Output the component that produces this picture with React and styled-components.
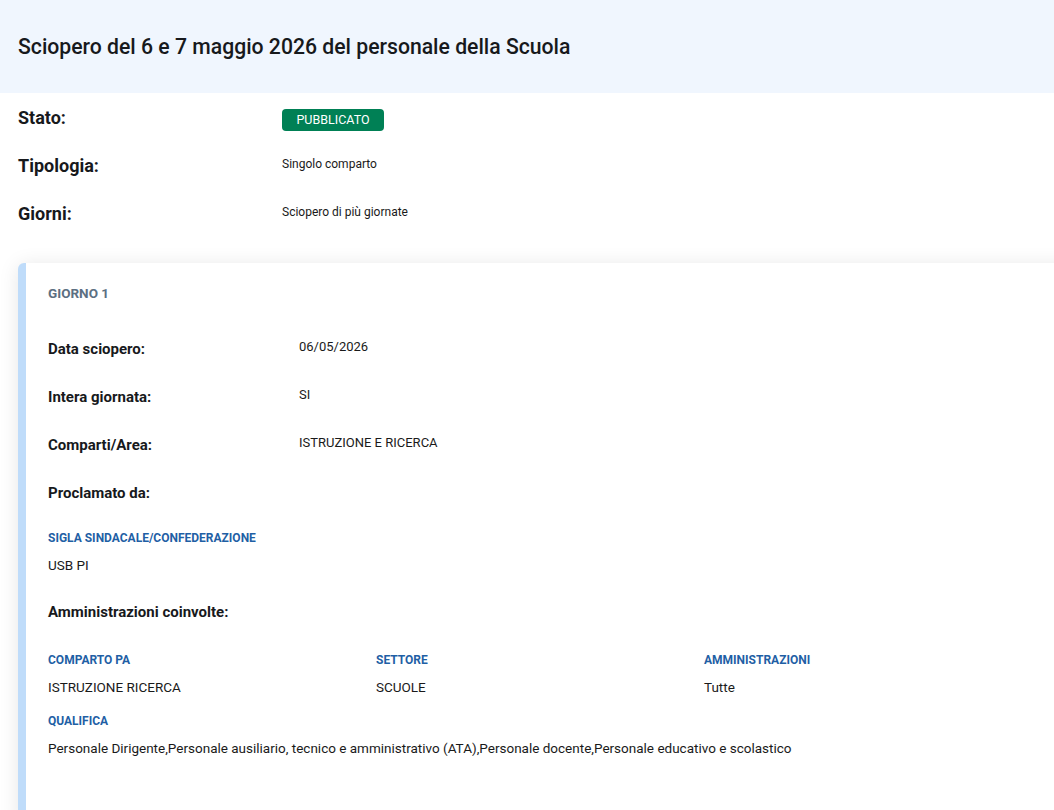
import React from 'react'
import styled, { createGlobalStyle } from 'styled-components'

const GlobalStyle = createGlobalStyle`
    body {
        margin: 0;
        background: #ffffff;
        font-family: Roboto, "Noto Sans", sans-serif;
        color: #1a1a1a;
        overflow-x: hidden;
    }
`

const Header = styled.header`
    background-color: #f0f6fe;
    height: 93px;
    display: flex;
    align-items: center;
    padding: 0 18px;
`

const Title = styled.h1`
    margin: 0;
    font-size: 21.2px;
    font-weight: 500;
    color: #17191c;
`

const Summary = styled.section`
    padding: 13px 18px 13px;
`

const SummaryRow = styled.div`
    display: flex;
    align-items: flex-start;
    height: 48px;
`

const SummaryLabel = styled.div`
    width: 264px;
    font-size: 18px;
    font-weight: 700;
    line-height: 24px;
    color: #17191c;
`

const SummaryValue = styled.div`
    font-size: 12px;
    line-height: 20px;
    color: #1a1a1a;
`

const Badge = styled.span`
    display: inline-block;
    margin-top: 3px;
    width: 102px;
    height: 22px;
    line-height: 22px;
    text-align: center;
    border-radius: 4px;
    background-color: #008055;
    color: #ffffff;
    font-size: 12.5px;
    font-weight: 400;
`

const Card = styled.article`
    margin-left: 18px;
    width: 1060px;
    min-height: 560px;
    box-sizing: border-box;
    border-left: 8px solid #bfdcfa;
    border-radius: 6px 0 0 0;
    background: #ffffff;
    box-shadow: 0 2px 20px rgba(0, 0, 0, 0.1);
    padding: 22px 24px 40px 22px;
`

const DayTitle = styled.h2`
    margin: 0 0 36px;
    font-size: 13.5px;
    line-height: 16px;
    font-weight: 700;
    color: #5c6f82;
    text-transform: uppercase;
`

const DetailRow = styled.div`
    display: flex;
    align-items: flex-start;
    height: ${p => (p.$last ? '24px' : '48px')};
`

const DetailLabel = styled.div`
    width: 251px;
    font-size: 15px;
    font-weight: 700;
    line-height: 24px;
    color: #17191c;
`

const DetailValue = styled.div`
    font-size: 13px;
    line-height: 20px;
`

const SectionLabel = styled.div`
    margin-top: ${p => p.$top || 0}px;
    font-size: 15px;
    font-weight: 700;
    line-height: 24px;
    color: #17191c;
`

const Field = styled.div`
    margin-top: ${p => p.$top || 0}px;
`

const FieldLabel = styled.div`
    font-size: 12px;
    font-weight: 700;
    line-height: 18px;
    color: #1f5fa5;
    text-transform: uppercase;
`

const FieldValue = styled.div`
    margin-top: 8px;
    font-size: 13.5px;
    line-height: 20px;
    color: #1a1a1a;
`

const Columns = styled.div`
    display: grid;
    grid-template-columns: repeat(3, 328px);
    margin-top: 27px;
`

const summary = [
    { label: 'Tipologia:', value: 'Singolo comparto' },
    { label: 'Giorni:', value: 'Sciopero di più giornate' },
]

const details = [
    { label: 'Data sciopero:', value: '06/05/2026' },
    { label: 'Intera giornata:', value: 'SI' },
    { label: 'Comparti/Area:', value: 'ISTRUZIONE E RICERCA' },
    { label: 'Proclamato da:', value: '' },
]

const admin = [
    { label: 'Comparto PA', value: 'ISTRUZIONE RICERCA' },
    { label: 'Settore', value: 'SCUOLE' },
    { label: 'Amministrazioni', value: 'Tutte' },
]

export default function App() {
    return (
        <>
            <GlobalStyle />
            <Header>
                <Title>Sciopero del 6 e 7 maggio 2026 del personale della Scuola</Title>
            </Header>
            <Summary>
                <SummaryRow>
                    <SummaryLabel>Stato:</SummaryLabel>
                    <Badge>PUBBLICATO</Badge>
                </SummaryRow>
                {summary.map(el => (
                    <SummaryRow key={el.label}>
                        <SummaryLabel>{el.label}</SummaryLabel>
                        <SummaryValue>{el.value}</SummaryValue>
                    </SummaryRow>
                ))}
            </Summary>
            <Card>
                <DayTitle>Giorno 1</DayTitle>
                {details.map((el, i) => (
                    <DetailRow key={el.label} $last={i === details.length - 1}>
                        <DetailLabel>{el.label}</DetailLabel>
                        <DetailValue>{el.value}</DetailValue>
                    </DetailRow>
                ))}
                <Field $top={24}>
                    <FieldLabel>Sigla sindacale/confederazione</FieldLabel>
                    <FieldValue>USB PI</FieldValue>
                </Field>
                <SectionLabel $top={25}>Amministrazioni coinvolte:</SectionLabel>
                <Columns>
                    {admin.map(el => (
                        <Field key={el.label}>
                            <FieldLabel>{el.label}</FieldLabel>
                            <FieldValue>{el.value}</FieldValue>
                        </Field>
                    ))}
                </Columns>
                <Field $top={15}>
                    <FieldLabel>Qualifica</FieldLabel>
                    <FieldValue>
                        Personale Dirigente,Personale ausiliario, tecnico e amministrativo (ATA),Personale docente,Personale educativo e scolastico
                    </FieldValue>
                </Field>
            </Card>
        </>
    )
}
